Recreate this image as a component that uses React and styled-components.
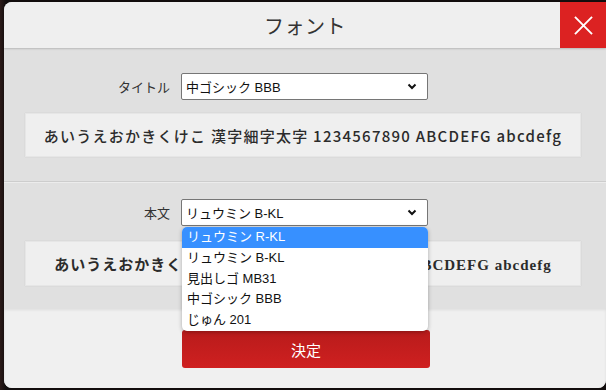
import React from "react";
import styled, { createGlobalStyle } from "styled-components";

const GlobalStyle = createGlobalStyle`
  html, body {
    margin: 0;
    padding: 0;
    background: #1c1414;
    overflow: hidden;
  }
  body {
    font-family: "Noto Sans CJK JP", "Noto Sans", sans-serif;
  }
`;

const SAMPLE = "あいうえおかきくけこ 漢字細字太字 1234567890 ABCDEFG abcdefg";
const OPTIONS = ["リュウミン R-KL", "リュウミン B-KL", "見出しゴ MB31", "中ゴシック BBB", "じゅん 201"];

const Page = styled.div`
  width: 606px;
  height: 390px;
  padding: 2px 0 0 4px;
  box-sizing: border-box;
  background: linear-gradient(90deg, #2b1a18 0px, #120d0d 6px);
`;

const Modal = styled.div`
  width: 602px;
  height: 386px;
  border-radius: 8px 0 8px 8px;
  background: #e0e0e0;
  display: flex;
  flex-direction: column;
`;

const Header = styled.header`
  display: grid;
  grid-template-columns: 46px 1fr 46px;
  height: 46px;
  background: #efefef;
  border-radius: 8px 0 0 0;
  box-shadow: 0 1px 2px rgba(0, 0, 0, 0.18);
  position: relative;
  z-index: 1;
`;

const Title = styled.h1`
  margin: 0;
  font-size: 20px;
  font-weight: 400;
  color: #333;
  display: flex;
  align-items: center;
  justify-content: center;
  letter-spacing: 0.5px;
`;

const CloseButton = styled.button`
  border: none;
  padding: 0;
  background: #dc2222;
  display: flex;
  align-items: center;
  justify-content: center;
  cursor: pointer;
`;

const Section = styled.section`
  padding: ${(p) => p.$top}px 25px ${(p) => p.$bottom}px 21px;
  display: flex;
  flex-direction: column;
  gap: ${(p) => p.$gap}px;
  border-bottom: ${(p) => (p.$divider ? "1px solid #cdcdcd" : "none")};
  box-shadow: ${(p) => (p.$divider ? "0 1px 0 #ececec" : "none")};
`;

const Row = styled.div`
  display: flex;
  align-items: center;
  gap: 11px;
  margin-left: -21px;
`;

const Label = styled.label`
  width: 166px;
  text-align: right;
  font-size: 13px;
  color: #333;
`;

const SelectWrap = styled.div`
  position: relative;
`;

const SelectBox = styled.div`
  width: 247px;
  height: 27px;
  box-sizing: border-box;
  border: 1px solid #767676;
  border-radius: 2px;
  background: #fff;
  display: flex;
  align-items: center;
  justify-content: space-between;
  padding: 0 10px 0 4px;
  font-family: "Liberation Sans", "Noto Sans CJK JP", sans-serif;
  font-size: 13px;
  color: #111;
`;

const Menu = styled.ul`
  position: absolute;
  top: 28px;
  left: 1px;
  width: 246px;
  margin: 0;
  padding: 0;
  list-style: none;
  background: #fff;
  border-radius: 5px;
  box-shadow: 0 1px 4px rgba(0, 0, 0, 0.3);
  overflow: hidden;
  z-index: 5;
`;

const MenuItem = styled.li`
  height: 20.8px;
  line-height: 20.8px;
  padding: 0 5px;
  font-family: "Liberation Sans", "Noto Sans CJK JP", sans-serif;
  font-size: 13px;
  color: ${(p) => (p.$active ? "#fff" : "#111")};
  background: ${(p) => (p.$active ? "#3790ff" : "transparent")};
`;

const Preview = styled.div`
  height: ${(p) => p.$h}px;
  background: #efefef;
  border: 1px solid #e6e6e6;
  box-sizing: border-box;
  box-shadow: 0 0 1px rgba(0, 0, 0, 0.12);
  display: flex;
  align-items: center;
  justify-content: center;
  font-size: 15px;
  letter-spacing: ${(p) => (p.$serif ? "1px" : "1.25px")};
  font-weight: ${(p) => (p.$serif ? 700 : 500)};
  color: #2b2b2b;
  font-family: ${(p) =>
    p.$serif
      ? '"Liberation Serif", "Noto Sans CJK JP", serif'
      : '"Noto Sans CJK JP", "Noto Sans", sans-serif'};
  white-space: nowrap;
`;

const Footer = styled.footer`
  flex: 1;
  background: #f0f0f0;
  border-radius: 0 0 8px 8px;
  box-shadow: inset 0 2px 3px rgba(0, 0, 0, 0.08);
  padding: 22px 0 0 178px;
  box-sizing: border-box;
`;

const SubmitButton = styled.button`
  width: 248px;
  height: 38px;
  border: none;
  border-radius: 3px;
  background: linear-gradient(180deg, #b81b1b 0%, #cf2020 100%);
  color: #fff;
  font-family: "Noto Sans CJK JP", sans-serif;
  font-size: 15px;
  cursor: pointer;
`;

const Chevron = () => (
  <svg width="10" height="7" viewBox="0 0 10 7">
    <path d="M1.5 1.5 L5 5 L8.5 1.5" fill="none" stroke="#111" strokeWidth="2" />
  </svg>
);

const FontSelect = ({ value, open }) => (
  <SelectWrap>
    <SelectBox>
      <span>{value}</span>
      <Chevron />
    </SelectBox>
    {open && (
      <Menu>
        {OPTIONS.map((o, i) => (
          <MenuItem key={o} $active={i === 0}>
            {o}
          </MenuItem>
        ))}
      </Menu>
    )}
  </SelectWrap>
);

export default function App() {
  return (
    <Page>
      <GlobalStyle />
      <Modal>
        <Header>
          <span />
          <Title>フォント</Title>
          <CloseButton aria-label="close">
            <svg width="19" height="19" viewBox="0 0 20 20">
              <path d="M1 1 L19 19 M19 1 L1 19" stroke="#fff" strokeWidth="2" />
            </svg>
          </CloseButton>
        </Header>
        <Section $top={25} $bottom={24} $gap={13} $divider>
          <Row>
            <Label>タイトル</Label>
            <FontSelect value="中ゴシック BBB" />
          </Row>
          <Preview $h={44}>{SAMPLE}</Preview>
        </Section>
        <Section $top={17} $bottom={22} $gap={15}>
          <Row>
            <Label>本文</Label>
            <FontSelect value="リュウミン B-KL" open />
          </Row>
          <Preview $h={45} $serif>
            {SAMPLE}
          </Preview>
        </Section>
        <Footer>
          <SubmitButton>決定</SubmitButton>
        </Footer>
      </Modal>
    </Page>
  );
}
